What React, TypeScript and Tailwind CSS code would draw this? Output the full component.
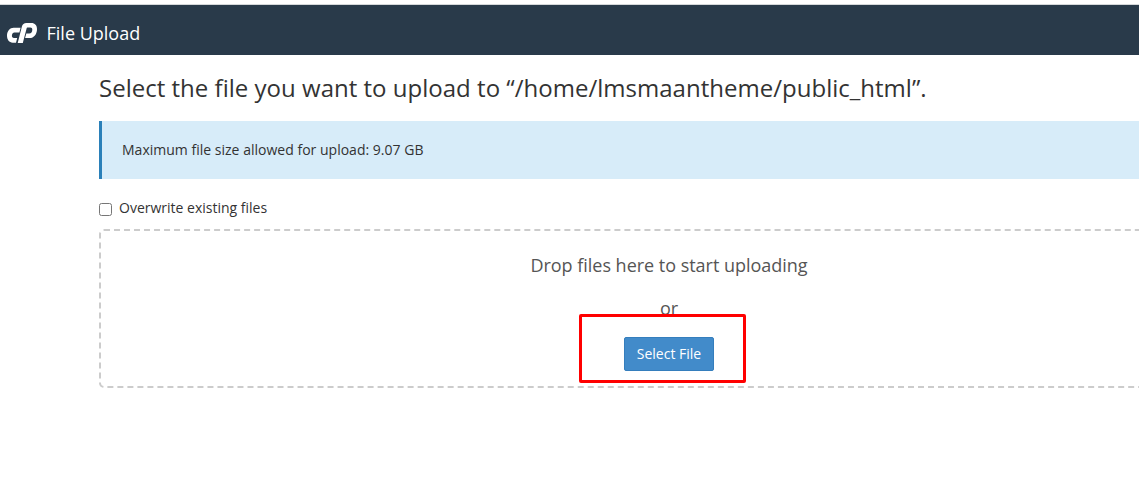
function PanelLogo() {
  return (
    <svg viewBox="0 0 30 20" className="mt-1.5 h-5 w-[30px]" fill="currentColor" aria-hidden="true">
      <path d="M13.6 4.8H6.7C2.9 4.8 0 8.2 0 12.6C0 16.8 2.2 19.7 5.7 19.7H9L10.2 15.1H7C5.5 15.1 4.8 14.2 4.9 12.6C5.1 10.5 6 9.4 7.4 9.4H12.4Z" />
      <path d="M10.7 20L14.9 3.6C15.5 1.2 17 0 19.4 0H24.3C28 0 30 2.4 30 6C30 11.2 27 15.1 22.5 15.1H18.1L19.3 10.6H22.2C24.2 10.6 25.3 9 25.3 6.7C25.3 5.2 24.6 4.5 23.3 4.5H20.8C20 4.5 19.8 4.8 19.6 5.4L15.8 20Z" />
    </svg>
  );
}

function Header() {
  return (
    <header className="mt-1 flex h-[51px] items-center border-t border-[#d5d8da] bg-[#293a4a] pl-[7px] text-white">
      <PanelLogo />
      <span className="ml-[9.5px] mt-1.5 text-[18px] leading-[26px]">File Upload</span>
    </header>
  );
}

function DropZone() {
  return (
    <section className="relative flex h-[159px] flex-col items-center rounded-[5px] border-2 border-dashed border-[#cccccc] text-[#555555]">
      <p className="mt-[21px] text-[18px] leading-[26px] tracking-[-0.02px]">Drop files here to start uploading</p>
      <p className="mt-[17px] text-[18px] leading-[26px]">or</p>
      <button className="mt-4 h-[34px] w-[90px] rounded-[2px] border border-[#357ebd] bg-[#428bca] text-[14px] leading-5 text-white">
        Select File
      </button>
      <div className="absolute left-[478px] top-[83px] h-[69px] w-[167px] rounded-[2px] border-[3px] border-[#ff0000]" />
    </section>
  );
}

export default function App() {
  return (
    <div className="h-[479px] w-full overflow-hidden bg-white font-['Open_Sans',sans-serif] text-[14px] text-[#333333]">
      <Header />
      <main className="ml-[99px] w-[1140px]">
        <h1 className="pt-4 text-[24px] leading-[34px] tracking-[0.014px]">
          Select the file you want to upload to “/home/lmsmaantheme/public_html”.
        </h1>
        <div className="mt-4 flex h-[58px] items-center border-l-[3px] border-[#2a80b9] bg-[#d7ecf9] pl-5 leading-5 tracking-[0.012px]">
          Maximum file size allowed for upload: 9.07 GB
        </div>
        <label className="mt-[18px] flex h-5 w-fit items-center">
          <input type="checkbox" className="mt-[5px] size-[13px]" />
          <span className="ml-[7px]">Overwrite existing files</span>
        </label>
        <div className="mt-3">
          <DropZone />
        </div>
      </main>
    </div>
  );
}
